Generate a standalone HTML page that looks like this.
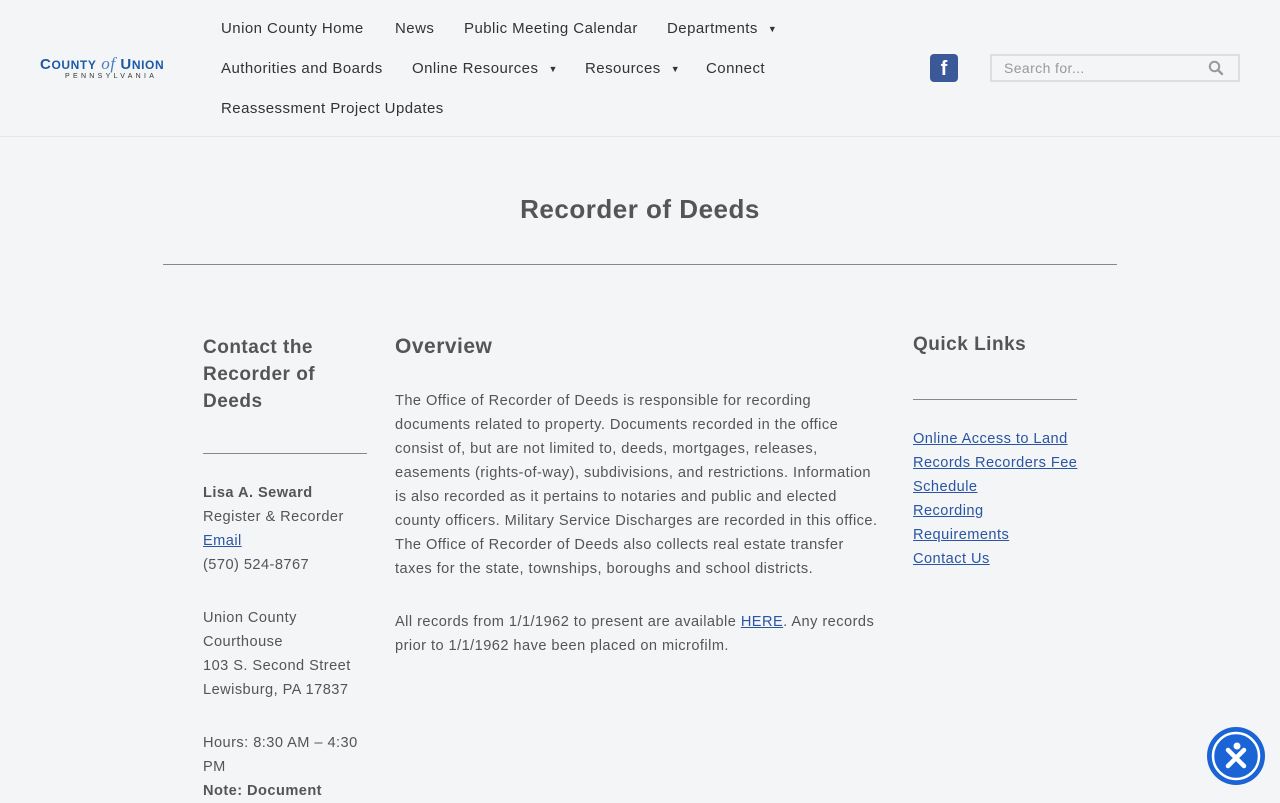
<!DOCTYPE html>
<html><head><meta charset="utf-8"><style>
*{margin:0;padding:0;box-sizing:border-box}
body{width:1280px;height:800px;overflow:hidden;background:#f3f5f7;font-family:"Liberation Sans",sans-serif;color:#555;position:relative}
.a{position:absolute;white-space:nowrap}
header{position:absolute;left:0;top:0;width:1280px;height:137px;border-bottom:1px solid #e6e8ea;background:#f3f5f7}
.nav{font-size:15px;color:#333;letter-spacing:0.45px}
.tri{font-size:9px;margin-left:10px;vertical-align:1px}
h1{font-size:26px;font-weight:bold;color:#555;letter-spacing:0.5px}
.h{font-weight:bold;color:#555;letter-spacing:0.5px}
.p{font-size:14.6px;line-height:24px;color:#555;letter-spacing:0.45px}
a{color:#2a55a3;text-decoration:underline}
.hr{position:absolute;height:1px;background:#888}
</style></head><body>
<header>
<div class="a" style="left:40px;top:54px;color:#1d5aa6;font-weight:bold;font-size:15px;letter-spacing:0.6px">C<span style="font-size:12px">OUNTY</span> <i style="font-family:'Liberation Serif',serif;font-weight:normal;color:#4a7cc0;font-size:17px">of</i> U<span style="font-size:12px">NION</span></div>
<div class="a" style="left:65px;top:73px;font-size:7px;letter-spacing:3.3px;color:#333">PENNSYLVANIA</div>
<div class="a nav" style="left:221px;top:20px">Union County Home</div>
<div class="a nav" style="left:395px;top:20px">News</div>
<div class="a nav" style="left:464px;top:20px">Public Meeting Calendar</div>
<div class="a nav" style="left:667px;top:20px">Departments<span class="tri">▼</span></div>
<div class="a nav" style="left:221px;top:60px">Authorities and Boards</div>
<div class="a nav" style="left:412px;top:60px">Online Resources<span class="tri">▼</span></div>
<div class="a nav" style="left:585px;top:60px">Resources<span class="tri">▼</span></div>
<div class="a nav" style="left:706px;top:60px">Connect</div>
<div class="a nav" style="left:221px;top:100px">Reassessment Project Updates</div>
<div class="a" style="left:930px;top:54px;width:28px;height:28px;background:#3b5998;border-radius:4px;color:#fff;font-weight:bold;font-size:20px;text-align:center;line-height:30px">f</div>
<div class="a" style="left:990px;top:54px;width:250px;height:28px;border:2px solid #dcdfe2;background:#f3f5f7"></div>
<div class="a" style="left:1004px;top:60px;font-size:14px;color:#999;letter-spacing:0.4px">Search for...</div>
<svg class="a" style="left:1208px;top:60px" width="16" height="16" viewBox="0 0 16 16"><circle cx="6.5" cy="6.5" r="4.7" fill="none" stroke="#999" stroke-width="2"/><path d="M10 10l4 4" stroke="#999" stroke-width="2.4" stroke-linecap="round"/></svg>
</header>
<h1 class="a" style="left:0;width:1280px;text-align:center;top:194px">Recorder of Deeds</h1>
<div class="hr" style="left:163px;top:264px;width:954px"></div>
<div class="a h" style="left:203px;top:334px;font-size:19px;line-height:27px">Contact the<br>Recorder of<br>Deeds</div>
<div class="hr" style="left:203px;top:453px;width:164px"></div>
<div class="a p" style="left:203px;top:481px"><b>Lisa A. Seward</b><br>Register &amp; Recorder<br><a>Email</a><br>(570) 524-8767</div>
<div class="a p" style="left:203px;top:606px">Union County<br>Courthouse<br>103 S. Second Street<br>Lewisburg, PA 17837</div>
<div class="a p" style="left:203px;top:731px">Hours: 8:30 AM – 4:30<br>PM<br><b>Note: Document</b></div>
<div class="a h" style="left:395px;top:335px;font-size:21px">Overview</div>
<div class="a p" style="left:395px;top:389px">The Office of Recorder of Deeds is responsible for recording<br>documents related to property. Documents recorded in the office<br>consist of, but are not limited to, deeds, mortgages, releases,<br>easements (rights-of-way), subdivisions, and restrictions. Information<br>is also recorded as it pertains to notaries and public and elected<br>county officers. Military Service Discharges are recorded in this office.<br>The Office of Recorder of Deeds also collects real estate transfer<br>taxes for the state, townships, boroughs and school districts.</div>
<div class="a p" style="left:395px;top:610px">All records from 1/1/1962 to present are available <a>HERE</a>. Any records<br>prior to 1/1/1962 have been placed on microfilm.</div>
<div class="a h" style="left:913px;top:334px;font-size:19px">Quick Links</div>
<div class="hr" style="left:913px;top:399px;width:164px"></div>
<div class="a p" style="left:913px;top:427px"><a>Online Access to Land</a><br><a>Records Recorders Fee</a><br><a>Schedule</a><br><a>Recording</a><br><a>Requirements</a><br><a>Contact Us</a></div>
<svg class="a" style="left:1206px;top:726px" width="60" height="60" viewBox="0 0 60 60"><circle cx="30" cy="30" r="29" fill="#1a64d6"/><circle cx="30" cy="30" r="23" fill="none" stroke="#fff" stroke-width="2.5"/><circle cx="31" cy="20" r="3.5" fill="#fff"/><path d="M22 40L38 24M22 24L38 40" stroke="#fff" stroke-width="4.5" stroke-linecap="round"/></svg>
</body></html>
